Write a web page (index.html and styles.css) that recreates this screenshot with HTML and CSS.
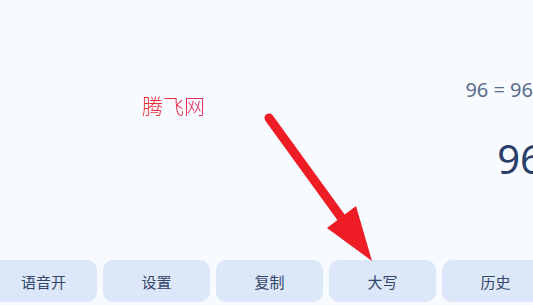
FILE: index.html
```html
<!DOCTYPE html>
<html lang="zh">
<head>
<meta charset="utf-8">
<link rel="stylesheet" href="styles.css">
</head>
<body>
<div class="app">
  <div class="screen">
    <div class="expr">96 = 96</div>
    <div class="result">96</div>
    <div class="watermark">腾飞网</div>
    <svg class="arrow" width="533" height="305" viewBox="0 0 533 305">
      <line x1="269" y1="118" x2="343" y2="220" stroke="#ee1c25" stroke-width="9" stroke-linecap="round"/>
      <polygon points="327,228 356,206 372,261" fill="#ee1c25"/>
    </svg>
  </div>
  <div class="keys">
    <div class="key">语音开</div>
    <div class="key">设置</div>
    <div class="key">复制</div>
    <div class="key">大写</div>
    <div class="key">历史</div>
  </div>
</div>
</body>
</html>
```

FILE: styles.css
```css
html, body {
  margin: 0;
  padding: 0;
  background: #f7fbff;
  overflow: hidden;
}
body {
  width: 533px;
  height: 305px;
  font-family: "Noto Sans", "Noto Sans CJK SC", sans-serif;
}
.app {
  width: 533px;
  height: 305px;
  display: flex;
  flex-direction: column;
  overflow: hidden;
}
.screen {
  height: 260px;
  display: flex;
  flex-direction: column;
  align-items: flex-end;
  margin-right: -12px;
  box-sizing: border-box;
  padding-top: 76px;
}
.expr {
  font-size: 20px;
  line-height: 28px;
  color: #5b6b8b;
  white-space: nowrap;
  margin-right: 12px;
}
.result {
  font-size: 40px;
  line-height: 54px;
  color: #2a3e6a;
  margin-top: 28px;
  margin-right: 2px;
  white-space: nowrap;
}
.watermark {
  position: absolute;
  left: 142px;
  top: 90px;
  font-family: "Noto Sans CJK SC", sans-serif;
  font-weight: 300;
  font-size: 21px;
  line-height: 30px;
  background: linear-gradient(90deg, #ee2a2a, #e8284a 60%, #e0305a);
  -webkit-background-clip: text;
  background-clip: text;
  color: transparent;
}
.arrow {
  position: absolute;
  left: 0;
  top: 0;
  z-index: 2;
}
.keys {
  display: flex;
  gap: 6px;
  margin-left: -10px;
  height: 42px;
}
.key {
  flex: 0 0 107px;
  height: 42px;
  border-radius: 10px;
  background: #dce8f9;
  color: #33466a;
  font-family: "Noto Sans CJK SC", sans-serif;
  font-size: 15px;
  display: flex;
  align-items: center;
  justify-content: center;
}
```
